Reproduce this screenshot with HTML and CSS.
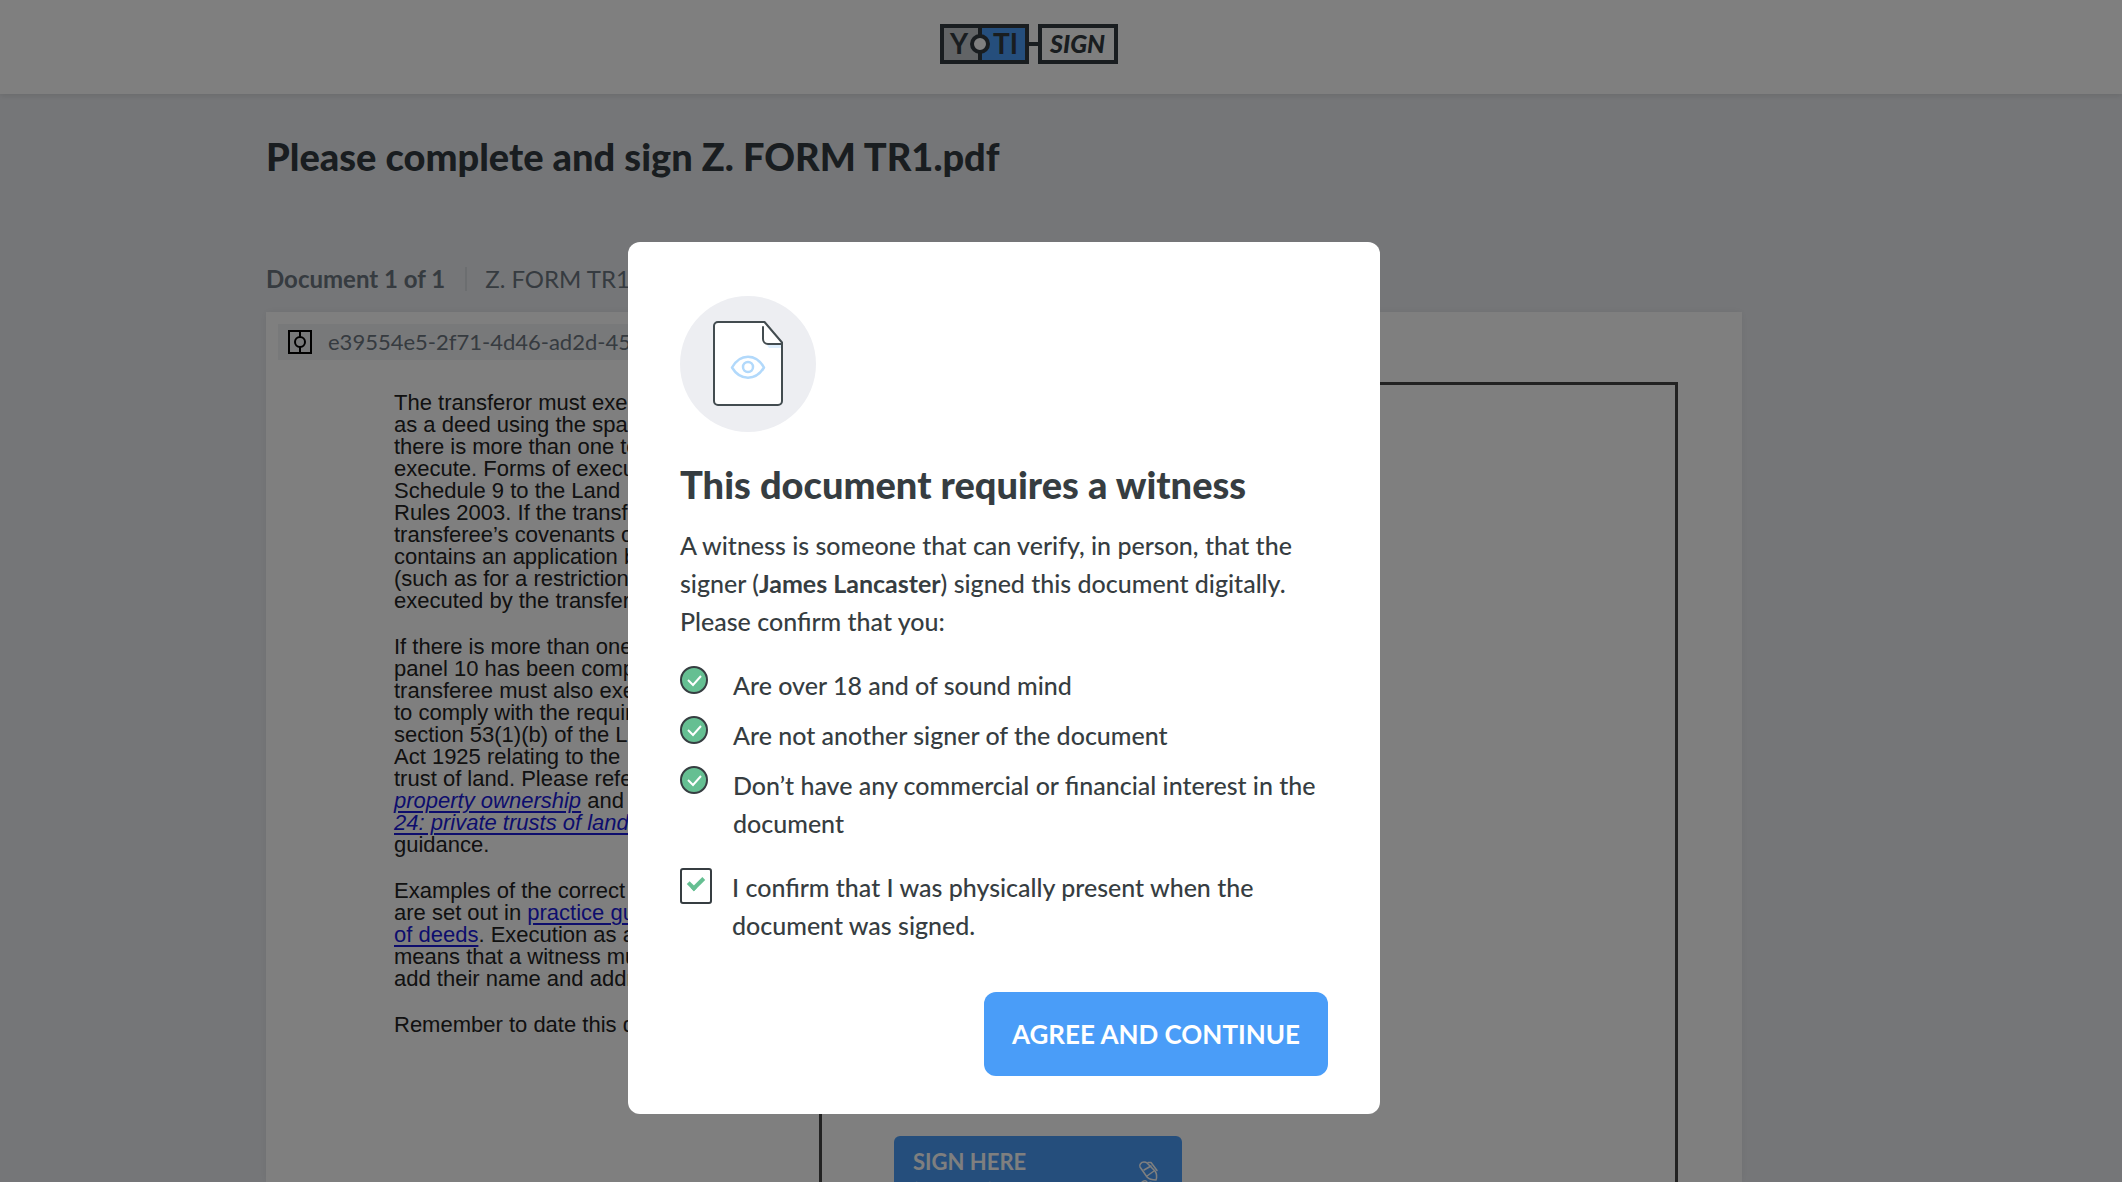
FILE: index.html
```html
<!DOCTYPE html>
<html lang="en">
<head>
  <meta charset="UTF-8">
  <meta name="viewport" content="width=device-width, initial-scale=1.0">
  <title>Yoti Sign</title>
  <link rel="stylesheet" href="styles.css">
</head>
<body>
  <header class="header">
    <svg class="logo" width="178" height="40" viewBox="0 0 178 40" role="img" aria-label="Yoti Sign">
      <rect x="2" y="2" width="85" height="36" fill="#c4c8cc"/>
      <rect x="40" y="2" width="47" height="36" fill="#4a9df8"/>
      <rect x="2" y="2" width="85" height="36" fill="none" stroke="#333b40" stroke-width="4"/>
      <path d="M40 2v36M89 20h9" stroke="#333b40" stroke-width="4"/>
      <circle cx="40" cy="20" r="8" fill="#fff" stroke="#333b40" stroke-width="4"/>
      <text class="logo-text" x="10" y="30">Y</text>
      <text class="logo-text" x="53" y="30">TI</text>
      <rect x="100" y="2" width="76" height="36" fill="none" stroke="#333b40" stroke-width="4"/>
      <text class="logo-text logo-sign" x="110" y="29">SIGN</text>
    </svg>
  </header>

  <main class="main">
    <h1 class="page-title">Please complete and sign Z. FORM TR1.pdf</h1>
    <div class="doc-info">
      <strong>Document 1 of 1</strong>
      <span class="doc-name">Z. FORM TR1</span>
    </div>

    <section class="doc-page">
      <div class="doc-id">
        <svg width="24" height="24" viewBox="0 0 24 24" fill="none" stroke="#000" stroke-width="2">
          <rect x="1" y="1" width="22" height="22"/>
          <circle cx="12" cy="12" r="5"/>
          <path d="M12 1v6M12 17v6"/>
        </svg>
        <span>e39554e5-2f71-4d46-ad2d-45</span>
      </div>
      <div class="panel">
        <div class="notes">
          <p>The transferor must execute this<br>
            as a deed using the space<br>
            there is more than one to<br>
            execute. Forms of execution<br>
            Schedule 9 to the Land<br>
            Rules 2003. If the transfer<br>
            transferee’s covenants or<br>
            contains an application by<br>
            (such as for a restriction)<br>
            executed by the transferee.</p>
          <p>If there is more than one<br>
            panel 10 has been completed<br>
            transferee must also execute<br>
            to comply with the requirements<br>
            section 53(1)(b) of the Law<br>
            Act 1925 relating to the<br>
            trust of land. Please refer<br>
            <a href="#"><em>property ownership</em></a> and<br>
            <a href="#"><em>24: private trusts of land</em></a><br>
            guidance.</p>
          <p>Examples of the correct<br>
            are set out in <a href="#">practice guide</a><br>
            <a href="#">of deeds</a>. Execution as a<br>
            means that a witness must<br>
            add their name and address.</p>
          <p>Remember to date this deed</p>
        </div>
        <div class="sign-area">
          <button class="sign-field" type="button">
            <span class="sign-text">
              <span>SIGN HERE</span>
              <small>(Required)</small>
            </span>
            <svg class="pen" width="24" height="32" viewBox="0 0 24 32" fill="none" stroke="#fff" stroke-width="1.5" stroke-linecap="round" stroke-linejoin="round">
              <path d="M6 1C3 1 1 4 2 6l7 10c2 2 5 3 9 3 1-3 1-6-1-9L9 2C8 1 7 1 6 1z"/>
              <path d="M10 1.500l3 0 6 8M6 9l7-4M9 15l7-5"/>
              <path d="M1 29c-1-4 3-10 7-9 3 2 0 5-2 8M9 23c3-3 8-2 8 4"/>
            </svg>
          </button>
        </div>
      </div>
    </section>
  </main>

  <div class="overlay">
    <div class="modal" role="dialog" aria-modal="true" aria-labelledby="modalTitle">
      <svg class="modal-icon" width="136" height="136" viewBox="0 0 136 136" fill="none">
        <circle cx="68" cy="68" r="68" fill="#edeef2"/>
        <path d="M38 26h46l18 21v58a4 4 0 0 1-4 4H38a4 4 0 0 1-4-4V30a4 4 0 0 1 4-4z" fill="#fff"/>
        <path d="M87 49h15v3H89z" fill="#dfeffd"/>
        <path d="M38 26h46.500l17.500 20.500V105a4 4 0 0 1-4 4H38a4 4 0 0 1-4-4V30a4 4 0 0 1 4-4z" stroke="#434c50" stroke-width="2" stroke-linejoin="round"/>
        <path d="M83 31v12a5 5 0 0 0 5 5h14" stroke="#434c50" stroke-width="2" stroke-linecap="round"/>
        <path d="M52 71.500C60 57 76 57 84 71.500C76 85 60 85 52 71.500z" stroke="#b2d9fb" stroke-width="2.500" stroke-linejoin="round"/>
        <circle cx="68" cy="71" r="5" stroke="#b2d9fb" stroke-width="2.500"/>
      </svg>
      <h2 class="modal-title" id="modalTitle">This document requires a witness</h2>
      <p class="modal-text">A witness is someone that can verify, in person, that the signer (<strong>James Lancaster</strong>) signed this document digitally. Please confirm that you:</p>
      <ul class="checks">
        <li>
          <svg width="28" height="28" viewBox="0 0 28 28" fill="none"><circle cx="14" cy="14" r="13" fill="#65bf92" stroke="#363d41" stroke-width="2"/><path d="M8 14l5 5 8-9" stroke="#fff" stroke-width="2"/></svg>
          <span>Are over 18 and of sound mind</span>
        </li>
        <li>
          <svg width="28" height="28" viewBox="0 0 28 28" fill="none"><circle cx="14" cy="14" r="13" fill="#65bf92" stroke="#363d41" stroke-width="2"/><path d="M8 14l5 5 8-9" stroke="#fff" stroke-width="2"/></svg>
          <span>Are not another signer of the document</span>
        </li>
        <li>
          <svg width="28" height="28" viewBox="0 0 28 28" fill="none"><circle cx="14" cy="14" r="13" fill="#65bf92" stroke="#363d41" stroke-width="2"/><path d="M8 14l5 5 8-9" stroke="#fff" stroke-width="2"/></svg>
          <span>Don’t have any commercial or financial interest in the document</span>
        </li>
      </ul>
      <div class="confirm">
        <input type="checkbox" id="confirm" checked>
        <label for="confirm">I confirm that I was physically present when the document was signed.</label>
      </div>
      <button class="agree" type="button">AGREE AND CONTINUE</button>
    </div>
  </div>
</body>
</html>
```

FILE: styles.css
```css
* {
  box-sizing: border-box;
}
body {
  display: flex;
  flex-direction: column;
  margin: 0;
  height: 100vh;
  overflow: hidden;
  background-color: #ebedf1;
  color: #333b40;
  font-family: Lato, "Liberation Sans", sans-serif;
}
h1, h2, p, ul {
  margin: 0;
}

/* header */
.header {
  display: flex;
  flex: none;
  justify-content: center;
  padding: 24px 64px 30px 0;
  background-color: #fff;
  box-shadow: 0 2px 6px rgba(0, 0, 0, 0.1);
}
.logo {
  display: block;
}
.logo-text {
  font-size: 28px;
  font-weight: 700;
  fill: #333b40;
}
.logo-sign {
  font-size: 25px;
  font-weight: 900;
  font-style: italic;
}

/* document */
.main {
  display: flex;
  flex: 1;
  flex-direction: column;
  width: 100%;
  min-height: 0;
  max-width: 1590px;
  margin: 0 auto;
  padding: 38px 114px 0 0;
}
.page-title {
  font-size: 38px;
  line-height: 48px;
  font-weight: 900;
}
.doc-info {
  display: flex;
  align-items: center;
  margin: 83px 0 17px;
  font-size: 24px;
  line-height: 32px;
  color: #6c7680;
}
.doc-name {
  margin-left: 20px;
  padding-left: 18px;
  border-left: 2px solid #d9dce1;
  line-height: 24px;
}
.doc-page {
  display: flex;
  flex: 1;
  flex-direction: column;
  min-height: 0;
  padding: 12px 12px 0;
  background-color: #fff;
  box-shadow: 0 0 8px rgba(0, 0, 0, 0.06);
}
.doc-id {
  display: flex;
  flex: none;
  align-items: center;
  gap: 16px;
  width: 480px;
  padding: 0 10px;
  font-size: 22px;
  line-height: 36px;
  background-color: #f1f2f5;
  color: #6c7680;
}
.panel {
  display: flex;
  flex: 1;
  min-height: 0;
  margin: 22px 52px 0 116px;
}
.notes {
  flex: 0 0 425px;
  padding-top: 10px;
  font-family: "Liberation Sans", Arial, sans-serif;
  font-size: 22px;
  line-height: 22px;
  white-space: nowrap;
  color: #222;
}
.notes p {
  margin-bottom: 24px;
}
.notes a {
  color: #1a1adb;
  text-underline-offset: 3px;
  text-decoration-thickness: 2px;
}
.sign-area {
  display: flex;
  flex: 1;
  align-items: flex-start;
  padding: 751px 0 0 72px;
  border: 3px solid #444;
  border-bottom: 0;
  overflow: hidden;
}
.sign-field {
  display: flex;
  justify-content: space-between;
  width: 288px;
  padding: 13px 20px 14px 19px;
  border: 0;
  border-radius: 6px;
  background-color: #4a9df8;
  color: #fff;
  font-family: inherit;
  text-align: left;
}
.sign-text {
  display: flex;
  flex-direction: column;
  font-size: 22px;
  line-height: 26px;
  font-weight: 700;
}
.sign-text small {
  font-size: 18px;
  font-weight: 400;
}
.pen {
  margin-top: 12px;
}

/* modal */
.overlay {
  position: fixed;
  inset: 0;
  display: flex;
  justify-content: center;
  align-items: flex-start;
  padding: 242px 114px 0 0;
  background-color: rgba(0, 0, 0, 0.5);
}
.modal {
  display: flex;
  flex-direction: column;
  width: 752px;
  padding: 54px 52px 38px;
  border-radius: 12px;
  background-color: #fff;
  color: #363d41;
  font-size: 25px;
  line-height: 38px;
  font-weight: 500;
}
.modal-icon {
  flex: none;
}
.modal-title {
  margin: 28px 0 18px;
  font-size: 38px;
  line-height: 48px;
  font-weight: 900;
}
.checks {
  display: flex;
  flex-direction: column;
  gap: 12px;
  margin: 26px 0;
  padding: 0;
  list-style: none;
}
.checks li {
  display: flex;
  gap: 25px;
}
.checks svg {
  flex: none;
}
.confirm {
  display: flex;
  gap: 20px;
}
.confirm input {
  flex: none;
  display: grid;
  justify-content: center;
  align-content: start;
  width: 32px;
  height: 36px;
  margin: 0;
  border: 2px solid #363d41;
  border-radius: 3px;
  appearance: none;
  background-color: #fff;
}
.confirm input:checked::before {
  content: "";
  width: 6px;
  height: 12px;
  margin-top: 4px;
  border: solid #65bf92;
  border-width: 0 4px 4px 0;
  transform: rotate(45deg);
}
.agree {
  align-self: flex-end;
  margin-top: 48px;
  padding: 0 28px;
  border: 0;
  border-radius: 12px;
  background-color: #4a9df8;
  color: #fff;
  font-family: inherit;
  font-size: 26px;
  line-height: 84px;
  font-weight: 700;
  cursor: pointer;
}
```
